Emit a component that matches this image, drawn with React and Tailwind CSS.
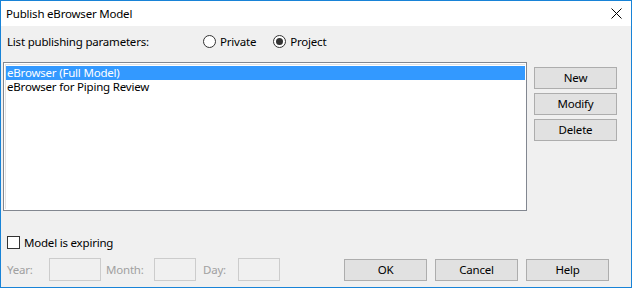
import React from "react";

const FONT = { fontFamily: '"Segoe UI", "Noto Sans", "Open Sans", sans-serif' };

function Button({ children, className = "" }) {
  return (
    <button
      className={`w-[83px] h-[22px] border border-[#adadad] bg-[#e1e1e1] text-black leading-none flex items-center justify-center ${className}`}
    >
      {children}
    </button>
  );
}

function Radio({ checked, label }) {
  return (
    <label className="flex items-center gap-[4px]">
      <span className="w-[13px] h-[13px] rounded-full border border-[#333333] bg-white flex items-center justify-center">
        {checked && <span className="w-[7px] h-[7px] rounded-full bg-[#333333]" />}
      </span>
      <span>{label}</span>
    </label>
  );
}

export default function App() {
  const rows = ["eBrowser (Full Model)", "eBrowser for Piping Review"];

  return (
    <div
      className="w-[632px] h-[288px] border border-[#1883d7] bg-[#f0f0f0] flex flex-col text-[11.5px] tracking-[-0.2px] text-black overflow-hidden"
      style={FONT}
    >
      {/* title bar */}
      <div className="h-[25px] bg-white flex items-center justify-between pl-[5px] pr-[9px] shrink-0">
        <span>Publish eBrowser Model</span>
        <svg width="11" height="11" viewBox="0 0 11 11">
          <path d="M0.5 0.5 L10.5 10.5 M10.5 0.5 L0.5 10.5" stroke="#000" strokeWidth="1" />
        </svg>
      </div>

      {/* parameters row */}
      <div className="flex items-center h-[13px] mt-[9px] pl-[6px]">
        <span className="w-[196px]">List publishing parameters:</span>
        <div className="flex items-center gap-[17px]">
          <Radio label="Private" />
          <Radio checked label="Project" />
        </div>
      </div>

      {/* list + side buttons */}
      <div className="flex mt-[14px] pl-[2px]">
        <div className="w-[524px] h-[149px] border border-[#828790] bg-white p-[1px]">
          <div className="border-l border-t border-[#e3e3e3] h-full pt-[1px]">
            {rows.map((r, i) => (
              <div
                key={r}
                className={`h-[14px] leading-[14px] pl-[1px] ${i === 0 ? "bg-[#3399ff] text-white" : ""}`}
              >
                {r}
              </div>
            ))}
          </div>
        </div>
        <div className="flex flex-col gap-[4px] ml-[7px] mt-[5px]">
          <Button>New</Button>
          <Button>Modify</Button>
          <Button>Delete</Button>
        </div>
      </div>

      {/* expiry checkbox */}
      <div className="flex items-center gap-[4px] mt-[23px] pl-[6px]">
        <span className="w-[13px] h-[13px] border border-[#333333] bg-white" />
        <span>Model is expiring</span>
      </div>

      {/* bottom row */}
      <div className="flex items-center mt-[7px] pl-[6px]">
        <span className="w-[42px] text-[#a0a0a0]">Year:</span>
        <span className="w-[52px] h-[23px] border border-[#cccccc]" />
        <span className="w-[48px] ml-[5px] text-[#a0a0a0]">Month:</span>
        <span className="w-[42px] h-[23px] border border-[#cccccc]" />
        <span className="w-[35px] ml-[7px] text-[#a0a0a0]">Day:</span>
        <span className="w-[42px] h-[23px] border border-[#cccccc]" />
        <div className="flex gap-[8px] ml-[64px]">
          <Button>OK</Button>
          <Button>Cancel</Button>
          <Button>Help</Button>
        </div>
      </div>
    </div>
  );
}
